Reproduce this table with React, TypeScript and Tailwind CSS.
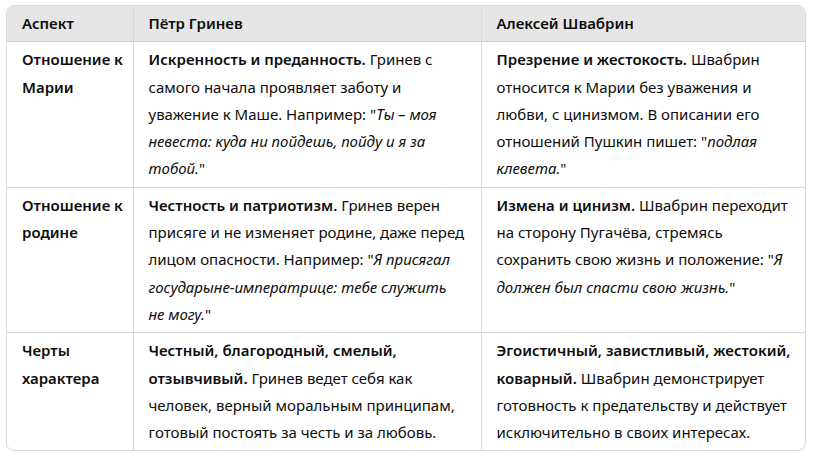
const cell = "border-[#d9d9d9] px-[15px] py-[4px] align-top";

function Q({ children }: { children: React.ReactNode }) {
  return <em className="italic">{children}</em>;
}

export default function App() {
  return (
    <div className="min-h-[463px] w-[824px] bg-white pl-[6px] pt-[5px] font-['Noto_Sans',sans-serif] text-[15px] leading-[27.3px] text-[#0d0d0d]">
      <div className="w-[800px] overflow-hidden rounded-[8px] border border-[#d9d9d9]">
        <table className="w-full table-fixed border-collapse whitespace-nowrap">
          <colgroup>
            <col className="w-[126px]" />
            <col className="w-[348px]" />
            <col />
          </colgroup>
          <thead>
            <tr className="bg-[#e6e6e6] text-left">
              <th className={`${cell} border-b border-b-[#cfcfcf] py-[3.5px] font-semibold`}>Аспект</th>
              <th className={`${cell} border-b border-l border-b-[#cfcfcf] py-[3.5px] font-semibold`}>Пётр Гринев</th>
              <th className={`${cell} border-b border-l border-b-[#cfcfcf] py-[3.5px] font-semibold`}>Алексей Швабрин</th>
            </tr>
          </thead>
          <tbody>
            <tr>
              <td className={`${cell} border-b font-semibold`}>
                Отношение к<br />Марии
              </td>
              <td className={`${cell} border-b border-l`}>
                <b className="font-semibold">Искренность и преданность.</b> Гринев с<br />
                самого начала проявляет заботу и<br />
                уважение к Маше. Например: "<Q>Ты – моя</Q>
                <br />
                <Q>невеста: куда ни пойдешь, пойду и я за</Q>
                <br />
                <Q>тобой.</Q>"
              </td>
              <td className={`${cell} border-b border-l`}>
                <b className="font-semibold">Презрение и жестокость.</b> Швабрин<br />
                относится к Марии без уважения и<br />
                любви, с цинизмом. В описании его<br />
                отношений Пушкин пишет: "<Q>подлая</Q>
                <br />
                <Q>клевета.</Q>"
              </td>
            </tr>
            <tr>
              <td className={`${cell} border-b font-semibold`}>
                Отношение к<br />родине
              </td>
              <td className={`${cell} border-b border-l`}>
                <b className="font-semibold">Честность и патриотизм.</b> Гринев верен<br />
                присяге и не изменяет родине, даже перед<br />
                лицом опасности. Например: "<Q>Я присягал</Q>
                <br />
                <Q>государыне-императрице: тебе служить</Q>
                <br />
                <Q>не могу.</Q>"
              </td>
              <td className={`${cell} border-b border-l`}>
                <b className="font-semibold">Измена и цинизм.</b> Швабрин переходит<br />
                на сторону Пугачёва, стремясь<br />
                сохранить свою жизнь и положение: "<Q>Я</Q>
                <br />
                <Q>должен был спасти свою жизнь.</Q>"
              </td>
            </tr>
            <tr>
              <td className={`${cell} font-semibold`}>
                Черты<br />характера
              </td>
              <td className={`${cell} border-l`}>
                <b className="font-semibold">Честный, благородный, смелый,</b>
                <br />
                <b className="font-semibold">отзывчивый.</b> Гринев ведет себя как<br />
                человек, верный моральным принципам,<br />
                готовый постоять за честь и за любовь.
              </td>
              <td className={`${cell} border-l`}>
                <b className="font-semibold">Эгоистичный, завистливый, жестокий,</b>
                <br />
                <b className="font-semibold">коварный.</b> Швабрин демонстрирует<br />
                готовность к предательству и действует<br />
                исключительно в своих интересах.
              </td>
            </tr>
          </tbody>
        </table>
      </div>
    </div>
  );
}
